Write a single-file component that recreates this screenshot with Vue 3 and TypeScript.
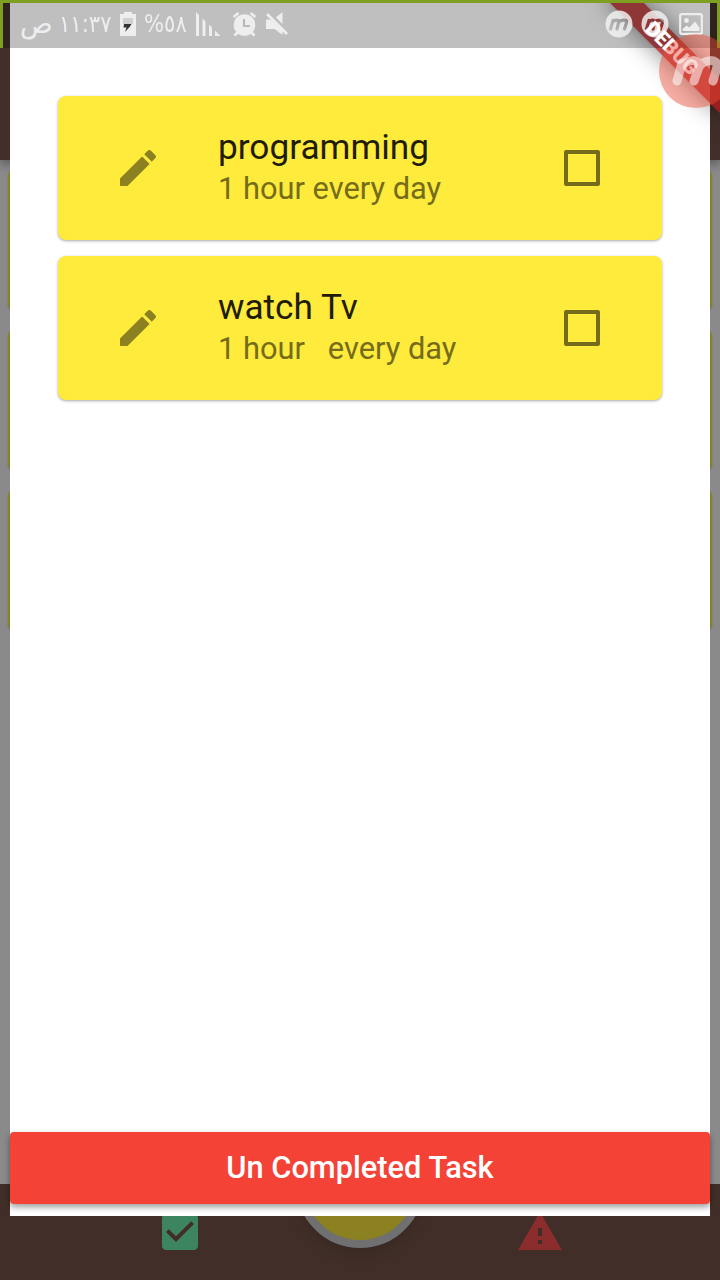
<script setup lang="ts">
interface Task {
  title: string
  note: string
}

const tasks: Task[] = [
  { title: 'programming', note: '1 hour every day' },
  { title: 'watch Tv', note: '1 hour   every day' },
]

const pageCards: number[] = [1, 2, 3]
</script>

<template>
  <div class="screen">
    <div class="page">
      <header class="app-bar"></header>
      <main class="page-body">
        <div v-for="n in pageCards" :key="n" class="page-card"></div>
      </main>
      <nav class="bottom-bar">
        <svg class="nav-icon green" viewBox="0 0 24 24"><path d="M19 3H5c-1.110 0-2 .9-2 2v14c0 1.100.89 2 2 2h14c1.110 0 2-.9 2-2V5c0-1.100-.89-2-2-2zm-9 14l-5-5 1.410-1.410L10 14.170l7.590-7.590L19 8l-9 9z" /></svg>
        <div class="fab"></div>
        <svg class="nav-icon red" viewBox="0 0 24 24"><path d="M1 21h22L12 2 1 21zm12-3h-2v-2h2v2zm0-4h-2v-4h2v4z" /></svg>
      </nav>
    </div>

    <section class="sheet">
      <ul class="tasks">
        <li v-for="task in tasks" :key="task.title" class="task">
          <svg class="pencil" viewBox="0 0 24 24"><path d="M3 17.250V21h3.750L17.810 9.940l-3.750-3.750L3 17.250zM20.710 7.040c.39-.39.39-1.020 0-1.410l-2.340-2.340c-.39-.39-1.020-.39-1.410 0l-1.830 1.830 3.750 3.750 1.830-1.830z" /></svg>
          <div class="text">
            <div class="title">{{ task.title }}</div>
            <div class="note">{{ task.note }}</div>
          </div>
          <span class="check"></span>
        </li>
      </ul>
      <button class="action" type="button">Un Completed Task</button>
    </section>

    <div class="banner ribbon"></div>

    <div class="status">
      <div class="status-left">
        <span class="period">ص</span>
        <span class="clock">١١:٣٧</span>
        <svg class="battery" width="16" height="24" viewBox="0 0 16 24">
          <path fill="#eee" d="M4 0h8v2h4v22H0V2h4z" />
          <path fill="#cfcfcf" d="M3 6h10v6H3z" />
          <path fill="#333" d="M4 12h7.500L10 14.500 5 20l1.500-4.500H3.500z" />
        </svg>
        <span class="percent">%٥٨</span>
        <svg class="signal" width="25" height="24" viewBox="0 0 25 24">
          <path fill="#eee" d="M0 0l3 3v21H0zM6.500 6.500l3 3V24h-3zM13 12.500l3 3V24h-3zM19 18.500L24.500 24H19z" />
        </svg>
        <svg class="alarm" width="25" height="25" viewBox="0 0 25 25">
          <circle cx="12.500" cy="13" r="10.800" fill="#eee" />
          <path d="M1.500 5L6.500 1M18.500 1L23.500 5M5.500 20.500L2.500 23.500M19.500 20.500L22.500 23.500" stroke="#eee" stroke-width="2.600" fill="none" />
          <path d="M12 7v7h6" stroke="#b9b9b9" stroke-width="2.200" fill="none" />
        </svg>
        <svg class="mute" width="24" height="24" viewBox="0 0 24 24">
          <path fill="#eee" d="M10 5.500L16.500 0v12zM0 7.500h4.500L16.500 18.500V23L8.500 17H0z" />
          <path d="M1 2L21 22" stroke="#eee" stroke-width="2.600" />
        </svg>
      </div>
      <div class="status-right">
        <svg v-for="n in 2" :key="n" width="28" height="28" viewBox="0 0 28 28">
          <mask :id="`cut${n}`">
            <circle cx="14" cy="14" r="13.500" fill="#fff" />
            <path class="mark" d="M5.500 19L8 10.500M7.500 12.500C9 9.500 14.500 9 13.500 12.500L12 19M13.500 12.500C15.500 9.500 22.500 9 21.500 12.500L19.500 19" />
          </mask>
          <rect width="28" height="28" fill="#f2f2f2" fill-opacity=".84" :mask="`url(#cut${n})`" />
        </svg>
        <svg class="photo" width="24" height="22" viewBox="0 0 24 22">
          <rect x="1.200" y="1.200" width="21.600" height="19.600" rx="1.500" fill="none" stroke="#eee" stroke-width="2.200" />
          <circle cx="7.500" cy="7.500" r="2.400" fill="#eee" />
          <path fill="#eee" d="M3.500 18v-2l4-3.500 3 2 5.500-6 4.500 6V18z" />
        </svg>
      </div>
    </div>

    <div class="banner">DEBUG</div>

    <svg class="bubble" width="74" height="74" viewBox="0 0 74 74">
      <circle cx="37" cy="37" r="37" fill="#ea4a36" fill-opacity=".45" />
      <path d="M18 47L23 29M22.500 33C27 25 42 24 40 33L35 47M40 33C45 25 60 24 58 33L54 47" fill="none" stroke="#fff" stroke-opacity=".55" stroke-width="9" stroke-linecap="round" stroke-linejoin="round" />
    </svg>
  </div>
</template>

<style>
body {
  margin: 0;
}
</style>

<style scoped>
.screen {
  position: relative;
  width: 720px;
  height: 1280px;
  overflow: hidden;
  font-family: Roboto, 'Liberation Sans', sans-serif;
}
.page {
  display: flex;
  flex-direction: column;
  height: 100%;
  background: #8a8a8a;
}
.app-bar {
  height: 160px;
  background: #412e28;
  box-shadow: 0 4px 10px rgba(0, 0, 0, 0.35);
}
.page-body {
  flex: 1;
  display: flex;
  flex-direction: column;
  gap: 20px;
  padding: 10px 8px 0;
}
.page-card {
  height: 140px;
  border-radius: 6px;
  background: #8b8121;
  box-shadow: 0 1px 2px rgba(0, 0, 0, 0.2);
}
.bottom-bar {
  height: 96px;
  box-sizing: border-box;
  padding: 24px 156px 0;
  display: flex;
  justify-content: space-between;
  background: #412e28;
}
.nav-icon {
  width: 48px;
  height: 48px;
}
.green {
  fill: #3d8460;
}
.red {
  fill: #8c2d2d;
}
.fab {
  box-sizing: border-box;
  width: 128px;
  height: 128px;
  margin-top: -88px;
  border: 8px solid #707070;
  border-radius: 50%;
  background: #8b8121;
  box-shadow: 0 6px 14px rgba(0, 0, 0, 0.12);
}
.sheet {
  position: absolute;
  inset: 0 10px 64px;
  box-sizing: border-box;
  padding: 96px 0 12px;
  display: flex;
  flex-direction: column;
  justify-content: space-between;
  background: #fff;
}
.tasks {
  list-style: none;
  margin: 0;
  padding: 0 48px;
  display: flex;
  flex-direction: column;
  gap: 16px;
}
.task {
  box-sizing: border-box;
  height: 144px;
  padding: 0 62px 0 56px;
  display: flex;
  align-items: center;
  border-radius: 8px;
  background: #ffeb3b;
  box-shadow: 0 1px 3px rgba(0, 0, 0, 0.35);
}
.pencil {
  width: 48px;
  height: 48px;
  fill: #8c8120;
}
.text {
  flex: 1;
  margin-left: 56px;
}
.title {
  padding-bottom: 2px;
  font-size: 35.2px;
  line-height: 40px;
  color: #1f1d07;
}
.note {
  font-size: 30.8px;
  line-height: 40px;
  color: #756c1b;
  white-space: pre;
}
.check {
  box-sizing: border-box;
  width: 36px;
  height: 36px;
  border: 4px solid #756c1b;
  border-radius: 2px;
}
.action {
  height: 72px;
  padding: 0 0 2px;
  border: 0;
  border-radius: 4px;
  background: #f44336;
  color: #fff;
  font-family: inherit;
  font-size: 30.8px;
  font-weight: 500;
  box-shadow: 0 3px 6px rgba(0, 0, 0, 0.4);
}
.banner {
  position: absolute;
  left: 640px;
  top: 56px;
  width: 160px;
  height: 24px;
  transform-origin: 80px -56px;
  transform: rotate(45deg);
  color: #fff;
  font-size: 20.4px;
  font-weight: 900;
  line-height: 24px;
  text-align: center;
}
.ribbon {
  background: rgba(175, 28, 28, 0.8);
  box-shadow: 0 0 24px rgba(0, 0, 0, 0.5);
}
.status {
  position: absolute;
  inset: 0 0 auto;
  height: 48px;
  box-sizing: border-box;
  padding: 0 17px 3px;
  display: flex;
  justify-content: space-between;
  background: rgba(0, 0, 0, 0.25);
  border: 3px solid #7f9f20;
  border-bottom: 0;
  color: #eee;
  line-height: 42px;
}
.status-left,
.status-right {
  display: flex;
  align-items: center;
  direction: ltr;
}
.period,
.clock,
.percent {
  font-family: 'DejaVu Sans', sans-serif;
  white-space: nowrap;
}
.period {
  width: 31px;
  font-size: 27px;
}
.clock {
  width: 53px;
  margin-left: 8px;
  font-size: 24px;
  direction: ltr;
  unicode-bidi: bidi-override;
  transform: scaleX(0.88);
  transform-origin: left;
}
.battery {
  margin-left: 8px;
}
.percent {
  width: 43px;
  margin-left: 8px;
  font-size: 24px;
  unicode-bidi: bidi-override;
  transform: scaleX(0.88);
  transform-origin: left;
}
.signal {
  margin-left: 9px;
}
.alarm {
  margin-left: 11px;
}
.mute {
  margin-left: 9px;
}
.status-right {
  gap: 8px;
}
.mark {
  fill: none;
  stroke: #000;
  stroke-width: 3.2;
  stroke-linecap: round;
  stroke-linejoin: round;
}
.photo {
  margin-left: 2px;
  margin-right: -3px;
}
.bubble {
  position: absolute;
  left: 659px;
  top: 34px;
}
</style>
